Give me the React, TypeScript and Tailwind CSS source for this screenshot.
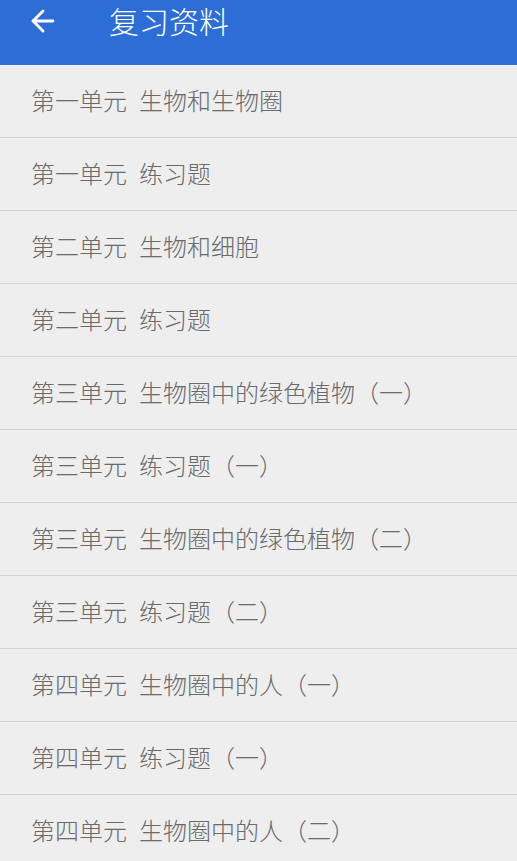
import { ArrowLeft } from 'lucide-react'

const items: [string, string][] = [
  ['第一单元', '生物和生物圈'],
  ['第一单元', '练习题'],
  ['第二单元', '生物和细胞'],
  ['第二单元', '练习题'],
  ['第三单元', '生物圈中的绿色植物（一）'],
  ['第三单元', '练习题（一）'],
  ['第三单元', '生物圈中的绿色植物（二）'],
  ['第三单元', '练习题（二）'],
  ['第四单元', '生物圈中的人（一）'],
  ['第四单元', '练习题（一）'],
  ['第四单元', '生物圈中的人（二）'],
]

export default function App() {
  return (
    <div
      className="w-[517px] h-[861px] overflow-hidden bg-[#eeeeee]"
      style={{ fontFamily: '"Noto Sans CJK SC", "Noto Sans", sans-serif' }}
    >
      <header className="h-[65px] bg-[#2c6ed6] flex items-start">
        <div className="w-[109px] h-[42px] flex items-center pl-[26px]">
          <ArrowLeft className="text-white" size={34} strokeWidth={2} />
        </div>
        <h1 className="text-white text-[30px] font-light leading-[40px]">
          复习资料
        </h1>
      </header>
      <ul>
        {items.map(([unit, title], i) => (
          <li
            key={i}
            className="h-[73px] border-b border-[#d4d4d4] flex items-center pl-[31px] pb-[3px] text-[24px] font-light text-[#6a6a6a]"
          >
            <span>{unit}</span>
            <span className="ml-[12px]">{title}</span>
          </li>
        ))}
      </ul>
    </div>
  )
}
